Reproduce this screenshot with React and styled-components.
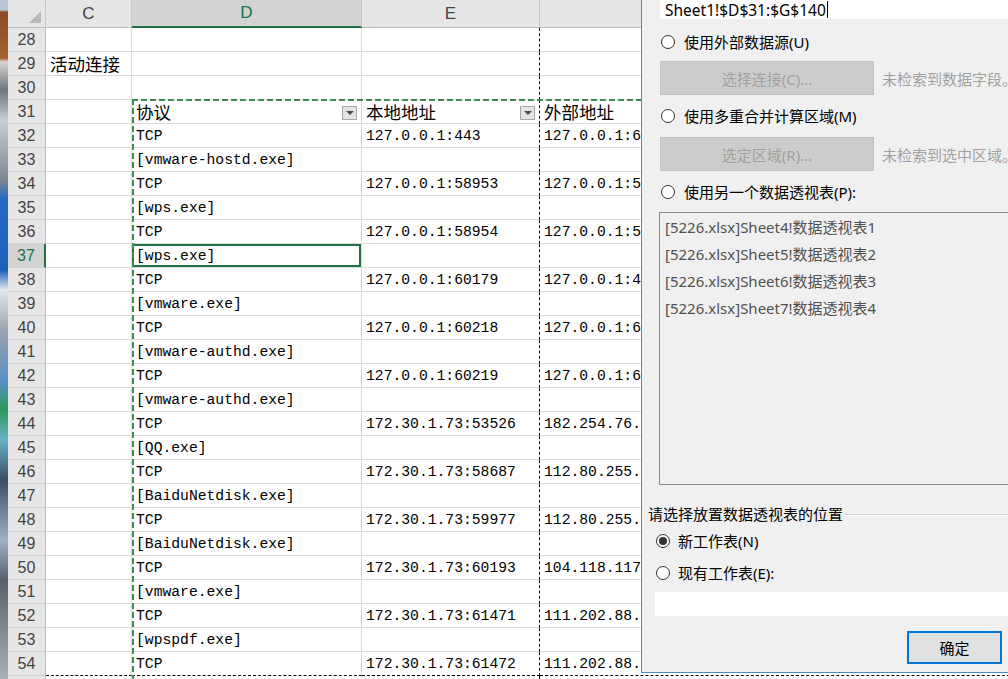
import React from 'react';
import styled, { createGlobalStyle, css } from 'styled-components';

const GlobalStyle = createGlobalStyle`
  html, body {
    margin: 0;
    padding: 0;
    overflow: hidden;
    background: #ffffff;
  }
  #root {
    width: 1008px;
    height: 679px;
  }
`;

const Screen = styled.div`
  position: relative;
  display: flex;
  width: 1008px;
  height: 679px;
  overflow: hidden;
`;

const DesktopStrip = styled.div`
  flex: none;
  width: 8px;
  background: linear-gradient(
    180deg,
    #b9c6d2 0px,
    #b9c6d2 10px,
    #8d4a26 12px,
    #a5602e 58px,
    #d9d4cf 62px,
    #6d7580 90px,
    #c9ced4 120px,
    #7d8793 180px,
    #2469c8 200px,
    #1d5fb8 270px,
    #e4e8ec 290px,
    #9aa4ae 330px,
    #5b8fc8 380px,
    #2f9a5a 410px,
    #6ab0c8 440px,
    #3a4f64 480px,
    #9cb2c4 540px,
    #58626c 580px,
    #a9b0b8 679px
  );
`;

const Sheet = styled.div`
  position: relative;
  display: grid;
  grid-template-columns: 38px 86px 230px 178px 500px;
  grid-template-rows: 28px;
  grid-auto-rows: 24px;
  align-content: start;
  background: #ffffff;
`;

const Corner = styled.div`
  position: relative;
  box-sizing: border-box;
  background: #e6e6e6;
  border-right: 1px solid #c6c6c6;
  border-bottom: 1px solid #bdbdbd;

  &::after {
    content: '';
    position: absolute;
    right: 4px;
    bottom: 4px;
    border-style: solid;
    border-width: 0 0 12px 12px;
    border-color: transparent transparent #b8b8b8 transparent;
  }
`;

const ColHeader = styled.div`
  box-sizing: border-box;
  display: flex;
  align-items: center;
  justify-content: center;
  background: #e6e6e6;
  border-right: 1px solid #c6c6c6;
  border-bottom: 1px solid #bdbdbd;
  font-family: "Liberation Sans", Arial, sans-serif;
  font-size: 17px;
  color: #444444;

  ${(p) =>
    p.$selected &&
    css`
      background: #d3d3d3;
      color: #217346;
      border-bottom: 2px solid #217346;
    `}
`;

const RowHeader = styled.div`
  box-sizing: border-box;
  display: flex;
  align-items: center;
  justify-content: center;
  background: #e6e6e6;
  border-right: 1px solid #bdbdbd;
  border-bottom: 1px solid #d2d2d2;
  font-family: "Liberation Sans", Arial, sans-serif;
  font-size: 16px;
  color: #444444;

  ${(p) =>
    p.$selected &&
    css`
      background: #d3d3d3;
      color: #217346;
      border-right: 2px solid #217346;
    `}
`;

const Cell = styled.div`
  box-sizing: border-box;
  display: flex;
  align-items: flex-end;
  padding: 0 4px 2px 4px;
  border-right: 1px solid #dadada;
  border-bottom: 1px solid #dadada;
  font-family: "Liberation Mono", "Courier New", monospace;
  font-size: 14.7px;
  line-height: 17px;
  color: #000000;
  white-space: nowrap;
  overflow: hidden;

  ${(p) =>
    p.$cjk &&
    css`
      align-items: center;
      padding-bottom: 0;
      font-family: "Noto Sans CJK SC", sans-serif;
      font-size: 17.5px;
      line-height: 23px;
    `}

  ${(p) =>
    p.$pageRight &&
    css`
      border-right: 1px dashed #000000;
    `}

  ${(p) =>
    p.$pageBottom &&
    css`
      border-bottom: 1px dashed #000000;
    `}

  ${(p) =>
    p.$active &&
    css`
      box-shadow: inset 0 0 0 2px #217346;
    `}
`;

const CellText = styled.span`
  flex: 1;
  overflow: hidden;
`;

const FilterButton = styled.span`
  flex: none;
  position: relative;
  box-sizing: border-box;
  width: 15px;
  height: 14px;
  margin-top: 2px;
  background: #e4e4e4;
  border: 1px solid #a8a8a8;

  &::after {
    content: '';
    position: absolute;
    left: 3px;
    top: 4px;
    border-style: solid;
    border-width: 4px 4px 0 4px;
    border-color: #4a4a4a transparent transparent transparent;
  }
`;

const Marquee = styled.div`
  position: absolute;
  left: 124px;
  top: 99px;
  width: 900px;
  height: 700px;
  pointer-events: none;
  background:
    repeating-linear-gradient(90deg, #3f8f52 0 6px, transparent 6px 9px) top left / 100% 2px no-repeat,
    repeating-linear-gradient(180deg, #3f8f52 0 6px, transparent 6px 9px) top left / 2px 100% no-repeat;
`;

const Dialog = styled.div`
  position: absolute;
  left: 641px;
  top: 0;
  width: 367px;
  height: 673px;
  box-sizing: border-box;
  display: flex;
  flex-direction: column;
  background: #f0f0f0;
  border-left: 1px solid #4b8bc8;
  border-bottom: 1px solid #4b8bc8;
  overflow: hidden;
  font-family: "Noto Sans", "Noto Sans CJK SC", sans-serif;
  font-size: 15px;
  color: #000000;
`;

const RangeInput = styled.div`
  flex: none;
  display: flex;
  align-items: center;
  width: 400px;
  height: 19px;
  margin-left: 18px;
  padding-left: 5px;
  background: #ffffff;
  font-size: 15.5px;
`;

const Caret = styled.span`
  width: 1px;
  height: 17px;
  margin-left: 1px;
  background: #000000;
`;

const OptionRow = styled.label`
  flex: none;
  display: flex;
  align-items: center;
  box-sizing: border-box;
  height: 22px;
  padding-bottom: 2px;
  margin-top: ${(p) => p.$top}px;
  padding-left: ${(p) => p.$indent}px;
  gap: ${(p) => p.$gap}px;
  white-space: nowrap;
`;

const Radio = styled.span`
  flex: none;
  display: flex;
  align-items: center;
  justify-content: center;
  box-sizing: border-box;
  width: 14px;
  height: 14px;
  margin-top: 2px;
  border-radius: 50%;
  border: 1px solid #333333;
  background: #ffffff;

  &::after {
    content: '';
    display: ${(p) => (p.$checked ? 'block' : 'none')};
    width: 8px;
    height: 8px;
    border-radius: 50%;
    background: #333333;
  }
`;

const ActionRow = styled.div`
  flex: none;
  display: flex;
  align-items: center;
  margin-top: ${(p) => p.$top}px;
  padding-left: 18px;
  white-space: nowrap;
`;

const DisabledButton = styled.div`
  flex: none;
  display: flex;
  align-items: center;
  justify-content: center;
  box-sizing: border-box;
  width: 214px;
  height: 34px;
  background: #cccccc;
  border: 1px solid #c2c2c2;
  color: #a0a0a0;
`;

const Hint = styled.span`
  margin-left: 8px;
  color: #a0a0a0;
`;

const PivotList = styled.div`
  flex: none;
  box-sizing: border-box;
  width: 400px;
  height: 273px;
  margin: 9px 0 0 17px;
  padding-top: 0;
  background: #f0f0f0;
  border: 1px solid #8a8a8a;
`;

const PivotItem = styled.div`
  display: flex;
  align-items: center;
  height: 27px;
  padding-left: 5px;
  color: #505050;
  white-space: nowrap;
`;

const GroupTitle = styled.div`
  flex: none;
  display: flex;
  align-items: center;
  box-sizing: border-box;
  height: 22px;
  padding-bottom: 2px;
  margin-top: 18px;
  padding-left: 6px;
  white-space: nowrap;

  &::after {
    content: '';
    flex: 1;
    height: 1px;
    margin-left: 2px;
    margin-top: 2px;
    background: #d6d6d6;
    box-shadow: 0 1px 0 #ffffff;
  }
`;

const TargetInput = styled.div`
  flex: none;
  width: 400px;
  height: 24px;
  margin: 8px 0 0 13px;
  background: #ffffff;
`;

const ButtonBar = styled.div`
  flex: none;
  display: flex;
  justify-content: flex-end;
  margin-top: 15px;
  padding-right: 6px;
`;

const OkButton = styled.button`
  box-sizing: border-box;
  width: 95px;
  height: 33px;
  padding: 0;
  background: #e1e1e1;
  border: 1px solid #0078d7;
  box-shadow: inset 0 0 0 1px #0078d7;
  font-family: "Noto Sans CJK SC", sans-serif;
  font-size: 15px;
  color: #000000;
`;

const rows = [
  { n: 28 },
  { n: 29, c: '活动连接' },
  { n: 30 },
  { n: 31, head: true, d: '协议', e: '本地地址', f: '外部地址' },
  { n: 32, d: 'TCP', e: '127.0.0.1:443', f: '127.0.0.1:60219' },
  { n: 33, d: '[vmware-hostd.exe]' },
  { n: 34, d: 'TCP', e: '127.0.0.1:58953', f: '127.0.0.1:58954' },
  { n: 35, d: '[wps.exe]' },
  { n: 36, d: 'TCP', e: '127.0.0.1:58954', f: '127.0.0.1:58953' },
  { n: 37, d: '[wps.exe]' },
  { n: 38, d: 'TCP', e: '127.0.0.1:60179', f: '127.0.0.1:49683' },
  { n: 39, d: '[vmware.exe]' },
  { n: 40, d: 'TCP', e: '127.0.0.1:60218', f: '127.0.0.1:60219' },
  { n: 41, d: '[vmware-authd.exe]' },
  { n: 42, d: 'TCP', e: '127.0.0.1:60219', f: '127.0.0.1:60218' },
  { n: 43, d: '[vmware-authd.exe]' },
  { n: 44, d: 'TCP', e: '172.30.1.73:53526', f: '182.254.76.43:443' },
  { n: 45, d: '[QQ.exe]' },
  { n: 46, d: 'TCP', e: '172.30.1.73:58687', f: '112.80.255.21:443' },
  { n: 47, d: '[BaiduNetdisk.exe]' },
  { n: 48, d: 'TCP', e: '172.30.1.73:59977', f: '112.80.255.21:443' },
  { n: 49, d: '[BaiduNetdisk.exe]' },
  { n: 50, d: 'TCP', e: '172.30.1.73:60193', f: '104.118.117.8:443' },
  { n: 51, d: '[vmware.exe]' },
  { n: 52, d: 'TCP', e: '172.30.1.73:61471', f: '111.202.88.12:443' },
  { n: 53, d: '[wpspdf.exe]' },
  { n: 54, d: 'TCP', e: '172.30.1.73:61472', f: '111.202.88.12:443' },
  { n: 55 },
];

const pivots = [
  '[5226.xlsx]Sheet4!数据透视表1',
  '[5226.xlsx]Sheet5!数据透视表2',
  '[5226.xlsx]Sheet6!数据透视表3',
  '[5226.xlsx]Sheet7!数据透视表4',
];

const HeadCell = ({ text, filter, ...rest }) => (
  <Cell $cjk {...rest}>
    <CellText>{text}</CellText>
    {filter && <FilterButton />}
  </Cell>
);

const SheetRow = ({ row }) => {
  const bottom = row.n === 54;
  const active = row.n === 37;
  if (row.head) {
    return (
      <>
        <RowHeader>{row.n}</RowHeader>
        <Cell />
        <HeadCell text={row.d} filter />
        <HeadCell text={row.e} filter $pageRight />
        <HeadCell text={row.f} />
      </>
    );
  }
  return (
    <>
      <RowHeader $selected={active}>{row.n}</RowHeader>
      <Cell $cjk={!!row.c} $pageBottom={bottom}>{row.c}</Cell>
      <Cell $active={active} $pageBottom={bottom}>{row.d}</Cell>
      <Cell $pageRight $pageBottom={bottom}>{row.e}</Cell>
      <Cell $pageBottom={bottom}>{row.f}</Cell>
    </>
  );
};

const PivotDialog = () => (
  <Dialog>
    <RangeInput>
      Sheet1!$D$31:$G$140
      <Caret />
    </RangeInput>

    <OptionRow $top={12} $indent={19} $gap={9}>
      <Radio />
      使用外部数据源(U)
    </OptionRow>
    <ActionRow $top={8}>
      <DisabledButton>选择连接(C)...</DisabledButton>
      <Hint>未检索到数据字段。</Hint>
    </ActionRow>

    <OptionRow $top={10} $indent={19} $gap={9}>
      <Radio />
      使用多重合并计算区域(M)
    </OptionRow>
    <ActionRow $top={10}>
      <DisabledButton>选定区域(R)...</DisabledButton>
      <Hint>未检索到选中区域。</Hint>
    </ActionRow>

    <OptionRow $top={10} $indent={19} $gap={9}>
      <Radio />
      使用另一个数据透视表(P):
    </OptionRow>
    <PivotList>
      {pivots.map((p) => (
        <PivotItem key={p}>{p}</PivotItem>
      ))}
    </PivotList>

    <GroupTitle>请选择放置数据透视表的位置</GroupTitle>
    <OptionRow $top={5} $indent={14} $gap={8}>
      <Radio $checked />
      新工作表(N)
    </OptionRow>
    <OptionRow $top={10} $indent={14} $gap={8}>
      <Radio />
      现有工作表(E):
    </OptionRow>
    <TargetInput />

    <ButtonBar>
      <OkButton>确定</OkButton>
    </ButtonBar>
  </Dialog>
);

export default function App() {
  return (
    <>
      <GlobalStyle />
      <Screen>
        <DesktopStrip />
        <Sheet>
          <Corner />
          <ColHeader>C</ColHeader>
          <ColHeader $selected>D</ColHeader>
          <ColHeader>E</ColHeader>
          <ColHeader>F</ColHeader>
          {rows.map((r) => (
            <SheetRow key={r.n} row={r} />
          ))}
          <Marquee />
        </Sheet>
        <PivotDialog />
      </Screen>
    </>
  );
}
